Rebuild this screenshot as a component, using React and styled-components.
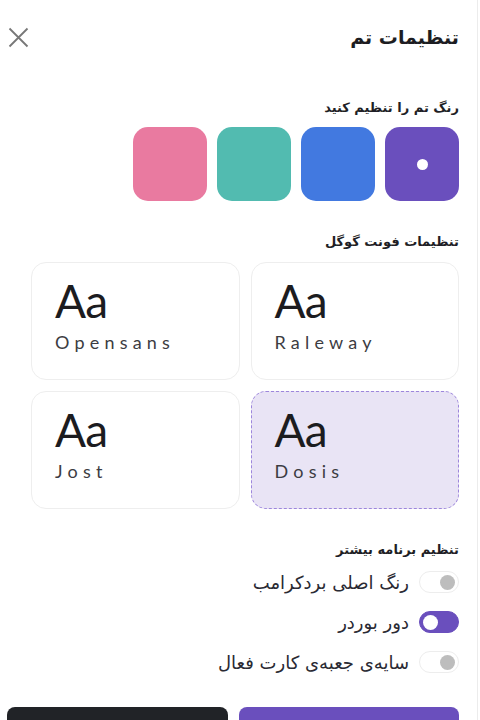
import React from "react";
import styled, { createGlobalStyle } from "styled-components";

const Global = createGlobalStyle`
  html, body { margin: 0; padding: 0; background: #fff; }
  body { font-family: "DejaVu Sans", "Noto Sans", sans-serif; overflow: hidden; }
`;

const Panel = styled.div`
  width: 478px;
  height: 720px;
  border-right: 1px solid #ececec;
  box-sizing: border-box;
  padding: 0 18px 0 7px;
  display: flex;
  flex-direction: column;
  overflow: hidden;
`;

const Header = styled.div`
  display: flex;
  direction: rtl;
  align-items: center;
  justify-content: space-between;
  height: 40px;
  margin-top: 26px;
`;

const Title = styled.h1`
  margin: 0;
  font-size: 19px;
  font-weight: 700;
  color: #1d1d22;
  letter-spacing: -0.5px;
`;

const Close = styled.button`
  border: 0;
  background: none;
  padding: 0;
  width: 22px;
  height: 22px;
  display: flex;
  align-items: center;
  justify-content: center;
`;

const SectionLabel = styled.div`
  direction: rtl;
  font-size: 13px;
  font-weight: 700;
  color: #1f1f26;
  letter-spacing: -0.4px;
  margin-top: ${(p) => p.$mt}px;
`;

const Swatches = styled.div`
  display: flex;
  direction: rtl;
  gap: 10px;
  margin-top: 12px;
`;

const Swatch = styled.div`
  width: 74px;
  height: 74px;
  border-radius: 15px;
  background: ${(p) => p.$c};
  display: flex;
  align-items: center;
  justify-content: center;
`;

const Dot = styled.span`
  width: 11px;
  height: 11px;
  border-radius: 50%;
  background: #fff;
`;

const Cards = styled.div`
  display: grid;
  grid-template-columns: 1fr 1fr;
  direction: rtl;
  gap: 11px 11px;
  margin: 13px 0 0 24px;
`;

const Card = styled.div`
  direction: ltr;
  height: 118px;
  box-sizing: border-box;
  border-radius: 15px;
  border: ${(p) => (p.$active ? "1.5px dashed #9d86dc" : "1.5px solid #eeeeee")};
  background: ${(p) => (p.$active ? "#e9e4f5" : "#fff")};
  padding: 14px 0 0 23px;
  display: flex;
  flex-direction: column;
`;

const Aa = styled.div`
  font-family: "Lato", "Noto Sans", sans-serif;
  font-weight: 400;
  font-size: 46px;
  line-height: 48px;
  color: #1c1c1f;
  letter-spacing: -1px;
`;

const FontName = styled.div`
  font-family: "Lato", "Noto Sans", sans-serif;
  font-size: 18px;
  letter-spacing: 5.2px;
  color: #3c3c42;
  margin-top: 6px;
`;

const Options = styled.div`
  display: flex;
  flex-direction: column;
  gap: 16px;
  margin-top: 13px;
`;

const OptionRow = styled.div`
  display: flex;
  direction: rtl;
  align-items: center;
  gap: 10px;
  height: 24px;
`;

const OptionText = styled.span`
  font-size: 18px;
  color: #2a2a33;
`;

const Track = styled.div`
  width: 40px;
  height: 22px;
  box-sizing: border-box;
  border-radius: 11px;
  background: ${(p) => (p.$on ? "#6a4fbd" : "#fff")};
  border: 1px solid ${(p) => (p.$on ? "#6a4fbd" : "#ededed")};
  display: flex;
  align-items: center;
  justify-content: ${(p) => (p.$on ? "flex-end" : "flex-start")};
  padding: 0 3px;
`;

const Knob = styled.span`
  width: 15px;
  height: 15px;
  border-radius: 50%;
  background: ${(p) => (p.$on ? "#fff" : "#bdbdbd")};
`;

const Buttons = styled.div`
  display: flex;
  direction: rtl;
  gap: 11px;
  margin-top: 33px;
`;

const Btn = styled.button`
  flex: 1;
  height: 40px;
  border: 0;
  border-radius: 8px;
  background: ${(p) => (p.$dark ? "#212327" : "#6a4fbd")};
`;

const colors = ["#6a4fbd", "#4279e0", "#52bbb0", "#e97aa0"];
const fonts = [
  { name: "Raleway" },
  { name: "Opensans" },
  { name: "Dosis", active: true },
  { name: "Jost" },
];
const opts = [
  { t: "رنگ اصلی بردکرامب", on: false },
  { t: "دور بوردر", on: true },
  { t: "سایه‌ی جعبه‌ی کارت فعال", on: false },
];

export default function App() {
  return (
    <>
      <Global />
      <Panel>
        <Header>
          <Title>تنظیمات تم</Title>
          <Close aria-label="close">
            <svg width="21" height="21" viewBox="0 0 21 21">
              <path d="M1.5 1.5 L19.5 19.5 M19.5 1.5 L1.5 19.5" stroke="#777" strokeWidth="1.8" fill="none" />
            </svg>
          </Close>
        </Header>
        <SectionLabel $mt={52}>رنگ تم را تنظیم کنید</SectionLabel>
        <Swatches>
          {colors.map((c, i) => (
            <Swatch key={c} $c={c}>{i === 0 && <Dot />}</Swatch>
          ))}
        </Swatches>
        <SectionLabel $mt={33}>تنظیمات فونت گوگل</SectionLabel>
        <Cards>
          {fonts.map((f) => (
            <Card key={f.name} $active={f.active}>
              <Aa>Aa</Aa>
              <FontName>{f.name}</FontName>
            </Card>
          ))}
        </Cards>
        <SectionLabel $mt={33}>تنظیم برنامه بیشتر</SectionLabel>
        <Options>
          {opts.map((o) => (
            <OptionRow key={o.t}>
              <Track $on={o.on}><Knob $on={o.on} /></Track>
              <OptionText>{o.t}</OptionText>
            </OptionRow>
          ))}
        </Options>
        <Buttons>
          <Btn />
          <Btn $dark />
        </Buttons>
      </Panel>
    </>
  );
}
